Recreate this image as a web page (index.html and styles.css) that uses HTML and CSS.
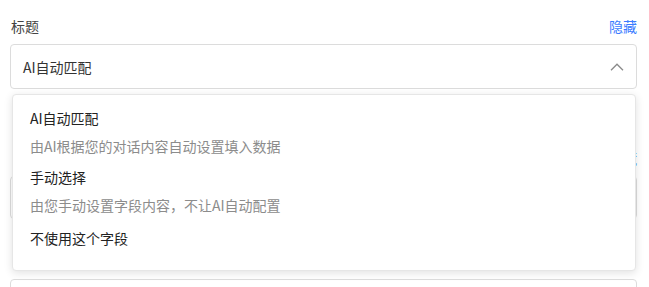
FILE: index.html
```html
<!DOCTYPE html>
<html lang="zh-CN">
<head>
    <meta charset="UTF-8">
    <meta name="viewport" content="width=device-width, initial-scale=1.0">
    <title>字段设置</title>
    <link rel="stylesheet" href="styles.css">
</head>
<body>
    <div class="form">
        <div class="field">
            <div class="field-head">
                <span class="field-label">标题</span>
                <a href="#" class="field-toggle">隐藏</a>
            </div>
            <div class="select-wrap">
                <div class="select open">
                    <span class="select-value">AI自动匹配</span>
                    <svg class="select-arrow" width="14" height="8" viewBox="0 0 14 8">
                        <path d="M1 7.2 L7 1.2 L13 7.2" fill="none" stroke="#8a8a8a" stroke-width="1.3"/>
                    </svg>
                </div>
                <ul class="dropdown">
                    <li class="option">
                        <div class="option-title">AI自动匹配</div>
                        <div class="option-desc">由AI根据您的对话内容自动设置填入数据</div>
                    </li>
                    <li class="option">
                        <div class="option-title">手动选择</div>
                        <div class="option-desc">由您手动设置字段内容，不让AI自动配置</div>
                    </li>
                    <li class="option option-last">
                        <div class="option-title">不使用这个字段</div>
                    </li>
                </ul>
            </div>
        </div>

        <!-- 下拉框后面被遮住的字段 -->
        <div class="field field-second">
            <div class="field-head">
                <span></span>
                <a href="#" class="field-toggle">隐藏</a>
            </div>
            <div class="select select-short"></div>
        </div>

        <div class="field field-third">
            <div class="select"></div>
        </div>
    </div>
</body>
</html>
```

FILE: styles.css
```css
body {
    margin: 0;
    background-color: #ffffff;
    font-family: "Noto Sans CJK SC", "Noto Sans", sans-serif;
    color: #333333;
    overflow: hidden;
}
.form {
    padding: 15px 12px 0 10px;
}
.field-head {
    display: flex;
    justify-content: space-between;
    align-items: center;
    height: 22px;
    margin-bottom: 7px;
}
.field-label {
    font-size: 14px;
    line-height: 22px;
    color: #444444;
    padding-left: 1px;
}
.field-toggle {
    font-size: 14px;
    line-height: 22px;
    color: #3b7cff;
    text-decoration: none;
}
.select-wrap {
    position: relative;
}
.select {
    display: flex;
    align-items: center;
    justify-content: space-between;
    height: 45px;
    box-sizing: border-box;
    padding: 0 12px;
    border: 1px solid #dcdcdc;
    border-radius: 4px;
    background-color: #fff;
}
.select-value {
    font-size: 14px;
    color: #333333;
}
.select-short {
    height: 43px;
}
.field-second {
    margin-top: 58px;
}
.field-third {
    margin-top: 60px;
}
.dropdown {
    position: absolute;
    top: 50px;
    left: 2px;
    right: 1px;
    margin: 0;
    padding: 7px 0 11px;
    list-style: none;
    background-color: #fff;
    border: 1px solid #e6e6e6;
    border-radius: 4px;
    box-shadow: 0 2px 8px rgba(0, 0, 0, 0.12);
    z-index: 10;
}
.option {
    padding: 5px 18px 4px 17px;
    cursor: pointer;
}
.option-last {
    padding: 7px 18px 10px 17px;
}
.option-title {
    font-size: 14px;
    line-height: 22px;
    color: #222222;
}
.option-desc {
    font-size: 14px;
    line-height: 22px;
    color: #8c8c8c;
    margin-top: 6px;
}
```
